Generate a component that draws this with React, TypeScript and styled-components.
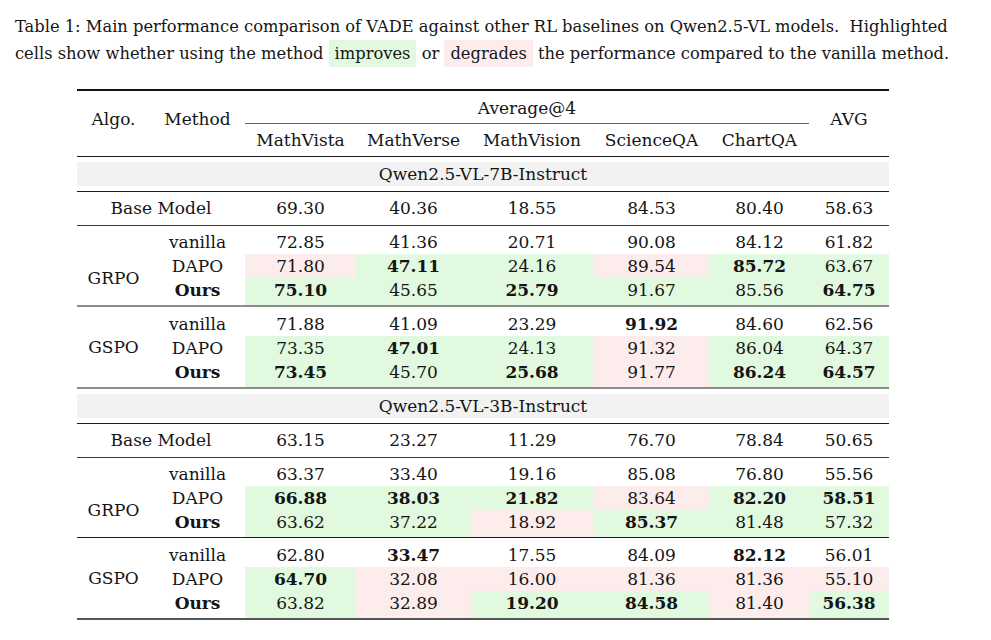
import styled, { createGlobalStyle } from 'styled-components';

type Tone = 'up' | 'down' | 'none';
type Pos = 'first' | 'mid' | 'last';
type Rule = 'thin' | 'gray' | 'soft' | 'none';

const GlobalStyle = createGlobalStyle`
    body {
        margin: 0;
        background: #ffffff;
        color: #151515;
        font-family: "DejaVu Serif", "Liberation Serif", serif;
    }
`;

// "47.11*+" -> bold, improves ; "71.80-" -> degrades
const parse = (raw: string) => ({
    text: raw.replace(/[*+-]+$/, ''),
    bold: /\*/.test(raw.slice(4)),
    tone: (raw.endsWith('+') ? 'up' : raw.endsWith('-') ? 'down' : 'none') as Tone,
});

const model7 = {
    base: ['69.30', '40.36', '18.55', '84.53', '80.40', '58.63'],
    groups: [
        {
            algo: 'GRPO',
            rule: 'gray' as Rule,
            lead: 4,
            drop: true,
            rows: [
                ['72.85', '41.36', '20.71', '90.08', '84.12', '61.82'],
                ['71.80-', '47.11*+', '24.16+', '89.54-', '85.72*+', '63.67+'],
                ['75.10*+', '45.65+', '25.79*+', '91.67+', '85.56+', '64.75*+'],
            ],
        },
        {
            algo: 'GSPO',
            rule: 'gray' as Rule,
            lead: 5,
            drop: false,
            rows: [
                ['71.88', '41.09', '23.29', '91.92*', '84.60', '62.56'],
                ['73.35+', '47.01*+', '24.13+', '91.32-', '86.04+', '64.37+'],
                ['73.45*+', '45.70+', '25.68*+', '91.77-', '86.24*+', '64.57*+'],
            ],
        },
    ],
};

const model3 = {
    base: ['63.15', '23.27', '11.29', '76.70', '78.84', '50.65'],
    groups: [
        {
            algo: 'GRPO',
            rule: 'thin' as Rule,
            lead: 4,
            drop: true,
            rows: [
                ['63.37', '33.40', '19.16', '85.08', '76.80', '55.56'],
                ['66.88*+', '38.03*+', '21.82*+', '83.64-', '82.20*+', '58.51*+'],
                ['63.62+', '37.22+', '18.92-', '85.37*+', '81.48+', '57.32+'],
            ],
        },
        {
            algo: 'GSPO',
            rule: 'none' as Rule,
            lead: 5,
            drop: false,
            rows: [
                ['62.80', '33.47*', '17.55', '84.09', '82.12*', '56.01'],
                ['64.70*+', '32.08-', '16.00-', '81.36-', '81.36-', '55.10-'],
                ['63.82+', '32.89-', '19.20*+', '84.58*+', '81.40-', '56.38*+'],
            ],
        },
    ],
};

const methods = ['vanilla', 'DAPO', 'Ours'];
const widths = [73, 95, 111, 115, 122, 117, 99, 80];
const benches = ['MathVista', 'MathVerse', 'MathVision', 'ScienceQA', 'ChartQA'];

function Section({ title, data, baseRule }: { title: string; data: typeof model7; baseRule: Rule }) {
    return (
        <>
            <tr>
                <BandCell colSpan={8}>
                    <Band>{title}</Band>
                </BandCell>
            </tr>
            <tr>
                <BaseCell colSpan={2} rule={baseRule}>Base Model</BaseCell>
                {data.base.map((v) => (
                    <BaseCell key={v} rule={baseRule}>{v}</BaseCell>
                ))}
            </tr>
            {data.groups.map((g) =>
                g.rows.map((row, i) => {
                    const pos: Pos = i === 0 ? 'first' : i === 2 ? 'last' : 'mid';
                    return (
                        <tr key={g.algo + i}>
                            {i === 0 && (
                                <AlgoCell rowSpan={3} rule={g.rule} drop={g.drop}>{g.algo}</AlgoCell>
                            )}
                            <Cell pos={pos} lead={g.lead} rule={g.rule} tone="none" bold={i === 2}>
                                {methods[i]}
                            </Cell>
                            {row.map((raw, j) => {
                                const c = parse(raw);
                                return (
                                    <Cell key={j} pos={pos} lead={g.lead} rule={g.rule} tone={c.tone} bold={c.bold}>
                                        {c.text}
                                    </Cell>
                                );
                            })}
                        </tr>
                    );
                })
            )}
        </>
    );
}

export default function App() {
    return (
        <Page>
            <GlobalStyle />
            <Caption>
                <Line>
                    Table 1: Main performance comparison of VADE against other RL baselines on Qwen2.5-VL models.&nbsp; Highlighted
                </Line>
                <Line>
                    cells show whether using the method <Mark tone="up">improves</Mark> or{' '}
                    <Mark tone="down">degrades</Mark> the performance compared to the vanilla method.
                </Line>
            </Caption>
            <Table>
                <colgroup>
                    {widths.map((w, i) => (
                        <col key={i} style={{ width: w }} />
                    ))}
                </colgroup>
                <thead>
                    <tr>
                        <SideHead rowSpan={2}>Algo.</SideHead>
                        <SideHead rowSpan={2}>Method</SideHead>
                        <GroupHead colSpan={5}>Average@4</GroupHead>
                        <SideHead rowSpan={2}>AVG</SideHead>
                    </tr>
                    <tr>
                        {benches.map((b) => (
                            <BenchHead key={b}>{b}</BenchHead>
                        ))}
                    </tr>
                </thead>
                <tbody>
                    <Section title="Qwen2.5-VL-7B-Instruct" data={model7} baseRule="soft" />
                    <Section title="Qwen2.5-VL-3B-Instruct" data={model3} baseRule="soft" />
                </tbody>
            </Table>
        </Page>
    );
}

const ruleCss = (r: Rule) => {
    if (r === 'thin') return 'border-bottom: 1px solid #1c1c1c;';
    if (r === 'soft') return 'border-bottom: 1px solid #3a3a3a;';
    if (r === 'gray') return 'border-bottom: 2px solid #8c8c8c;';
    return '';
};

const Page = styled.div`
    width: 991px;
    min-height: 640px;
    padding: 13px 0 0 0;
    box-sizing: border-box;
`;

const Caption = styled.div`
    padding-left: 15px;
    font-size: 16.3px;
    line-height: 27px;
`;

const Line = styled.div`
    white-space: nowrap;
`;

const Mark = styled.span<{ tone: Tone }>`
    padding: 4px 6px;
    background: ${({ tone }) => (tone === 'up' ? '#e1f9df' : '#fcecec')};
`;

const Table = styled.table`
    margin: 22px 0 0 77px;
    width: 812px;
    table-layout: fixed;
    border-collapse: separate;
    border-spacing: 0;
    border-top: 2px solid #111;
    border-bottom: 2px solid #555;
    font-size: 17px;
    line-height: 24px;
    text-align: center;

    th {
        font-weight: 400;
    }
`;

const SideHead = styled.th`
    padding: 0 0 10px;
    vertical-align: middle;
    border-bottom: 1px solid #1c1c1c;
`;

const GroupHead = styled.th`
    padding: 5px 0 3px;
    border-bottom: 1px solid #666;
`;

const BenchHead = styled.th`
    padding: 4px 0;
    border-bottom: 1px solid #1c1c1c;
`;

const BandCell = styled.td`
    padding: 5px 0;
    border-bottom: 1px solid #1c1c1c;
`;

const Band = styled.div`
    background: #f2f2f2;
    line-height: 24px;
`;

const BaseCell = styled.td<{ rule: Rule }>`
    padding: 4px 0 5px;
    ${({ rule }) => ruleCss(rule)}
`;

// GRPO labels sit half a row lower than the middle of their group
const AlgoCell = styled.td<{ rule: Rule; drop: boolean }>`
    vertical-align: middle;
    padding: ${({ drop }) => (drop ? '24px 0 0' : '0')};
    ${({ rule }) => ruleCss(rule)}
`;

const Cell = styled.td<{ pos: Pos; lead: number; rule: Rule; tone: Tone; bold: boolean }>`
    padding: ${({ pos, lead }) => (pos === 'first' ? `${lead}px 0 0` : pos === 'last' ? '0 0 3px' : '0')};
    font-weight: ${({ bold }) => (bold ? 700 : 400)};
    background: ${({ tone }) => (tone === 'up' ? '#e1f9df' : tone === 'down' ? '#fcecec' : 'transparent')};
    ${({ pos, rule }) => (pos === 'last' ? ruleCss(rule) : '')}
`;
